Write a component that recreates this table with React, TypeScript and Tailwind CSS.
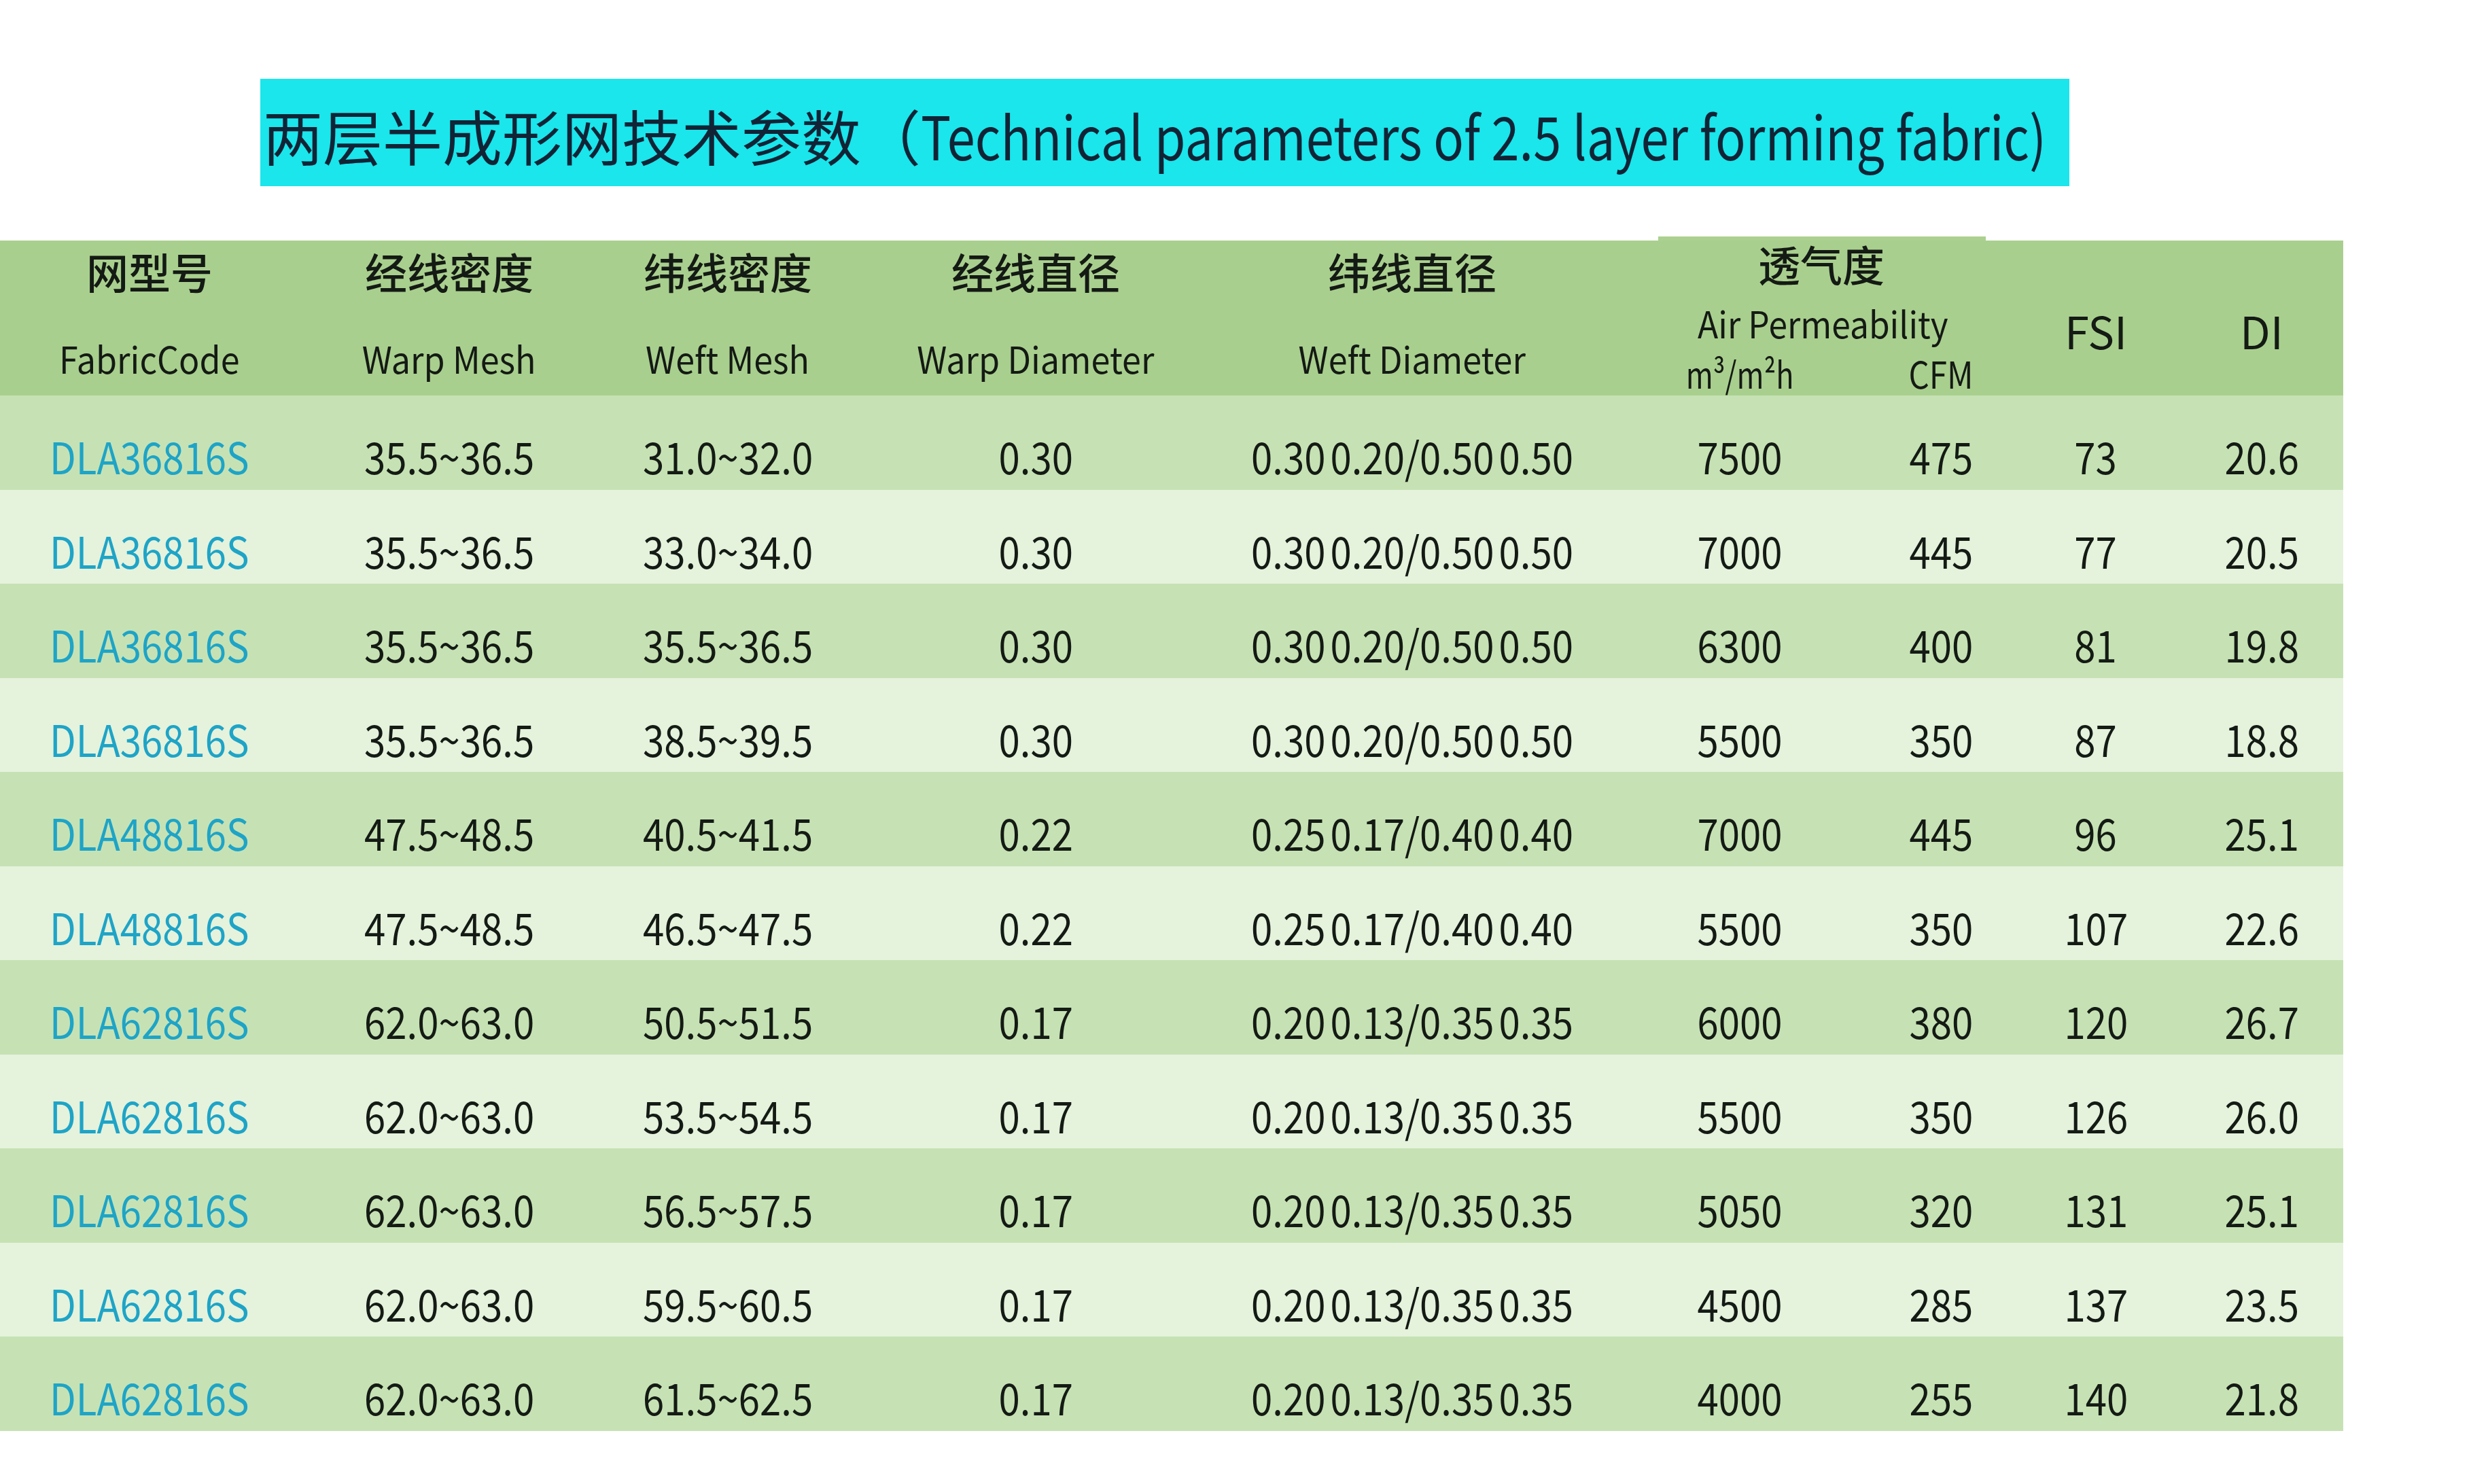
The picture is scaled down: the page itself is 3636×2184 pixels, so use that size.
type Row = {
  code: string;
  warp: string;
  weft: string;
  warpD: string;
  weftD: [string, string, string];
  m3: string;
  cfm: string;
  fsi: string;
  di: string;
};

const d30: [string, string, string] = ["0.30", "0.20/0.50", "0.50"];
const d25: [string, string, string] = ["0.25", "0.17/0.40", "0.40"];
const d20: [string, string, string] = ["0.20", "0.13/0.35", "0.35"];

const rows: Row[] = [
  { code: "DLA36816S", warp: "35.5~36.5", weft: "31.0~32.0", warpD: "0.30", weftD: d30, m3: "7500", cfm: "475", fsi: "73", di: "20.6" },
  { code: "DLA36816S", warp: "35.5~36.5", weft: "33.0~34.0", warpD: "0.30", weftD: d30, m3: "7000", cfm: "445", fsi: "77", di: "20.5" },
  { code: "DLA36816S", warp: "35.5~36.5", weft: "35.5~36.5", warpD: "0.30", weftD: d30, m3: "6300", cfm: "400", fsi: "81", di: "19.8" },
  { code: "DLA36816S", warp: "35.5~36.5", weft: "38.5~39.5", warpD: "0.30", weftD: d30, m3: "5500", cfm: "350", fsi: "87", di: "18.8" },
  { code: "DLA48816S", warp: "47.5~48.5", weft: "40.5~41.5", warpD: "0.22", weftD: d25, m3: "7000", cfm: "445", fsi: "96", di: "25.1" },
  { code: "DLA48816S", warp: "47.5~48.5", weft: "46.5~47.5", warpD: "0.22", weftD: d25, m3: "5500", cfm: "350", fsi: "107", di: "22.6" },
  { code: "DLA62816S", warp: "62.0~63.0", weft: "50.5~51.5", warpD: "0.17", weftD: d20, m3: "6000", cfm: "380", fsi: "120", di: "26.7" },
  { code: "DLA62816S", warp: "62.0~63.0", weft: "53.5~54.5", warpD: "0.17", weftD: d20, m3: "5500", cfm: "350", fsi: "126", di: "26.0" },
  { code: "DLA62816S", warp: "62.0~63.0", weft: "56.5~57.5", warpD: "0.17", weftD: d20, m3: "5050", cfm: "320", fsi: "131", di: "25.1" },
  { code: "DLA62816S", warp: "62.0~63.0", weft: "59.5~60.5", warpD: "0.17", weftD: d20, m3: "4500", cfm: "285", fsi: "137", di: "23.5" },
  { code: "DLA62816S", warp: "62.0~63.0", weft: "61.5~62.5", warpD: "0.17", weftD: d20, m3: "4000", cfm: "255", fsi: "140", di: "21.8" },
];

const cols = "grid grid-cols-[440px_442px_378px_528px_580px_384px_208px_248px_240px]";

// narrow latin text, the source uses a condensed face
const Narrow = ({ children, className = "" }: { children: React.ReactNode; className?: string }) => (
  <span className={`inline-block scale-x-[0.88] ${className}`}>{children}</span>
);

const HeadCell = ({ zh, en }: { zh: string; en: string }) => (
  <div className="flex flex-col items-center pt-[14px]">
    <div className="text-[62px] leading-[62px] font-medium">{zh}</div>
    <div className="mt-[70px] text-[54px] leading-[54px] scale-x-[0.93]">{en}</div>
  </div>
);

const App = () => {
  return (
    <div className="w-[3636px] h-[2184px] bg-white text-[#141a14] font-['Noto_Sans_CJK_SC',sans-serif] overflow-hidden">
      {/* --- Title --- */}
      <div className="ml-[383px] mt-[116px] w-[2662px] h-[158px] bg-[#1ae6ec] flex items-center pl-[4px] pt-[6px]">
        <h1 className="text-[88px] leading-none font-normal text-[#112436] whitespace-nowrap">
          <span>两层半成形网技术参数（</span>
          <span className="inline-block origin-left scale-x-[0.84]">Technical parameters of 2.5 layer forming fabric)</span>
        </h1>
      </div>

      {/* --- Table --- */}
      <div className="mt-[74px] w-[3448px]">
        <div className="flex h-[6px]">
          <div className="ml-[2440px] w-[482px] bg-[#abd090]" />
        </div>

        {/* header */}
        <div className={`${cols} h-[228px] bg-[#a9cf8e]`}>
          <HeadCell zh="网型号" en="FabricCode" />
          <HeadCell zh="经线密度" en="Warp Mesh" />
          <HeadCell zh="纬线密度" en="Weft Mesh" />
          <HeadCell zh="经线直径" en="Warp Diameter" />
          <HeadCell zh="纬线直径" en="Weft Diameter" />
          <div className="col-span-2 flex flex-col items-center pt-[3px]">
            <div className="ml-[32px] text-[62px] leading-[62px] font-medium">透气度</div>
            <div className="ml-[36px] mt-[29px] text-[54px] leading-[54px] scale-x-[0.92]">Air Permeability</div>
            <div className="mt-[20px] grid grid-cols-[384px_208px] w-full text-[54px] leading-[54px]">
              <div className="text-center">
                <span className="inline-block scale-x-[0.8]">m³/m²h</span>
              </div>
              <div className="text-center">
                <Narrow>CFM</Narrow>
              </div>
            </div>
          </div>
          <div className="text-center pt-[100px] text-[65px] leading-[65px]">FSI</div>
          <div className="text-center pt-[100px] text-[65px] leading-[65px]">DI</div>
        </div>

        {/* body */}
        {rows.map((r, i) => (
          <div
            key={i}
            className={`${cols} h-[138.5px] pt-[56px] text-[64px] leading-[64px] text-center ${
              i % 2 === 0 ? "bg-[#c6e2b4]" : "bg-[#e5f2dc]"
            }`}
          >
            <div>
              <Narrow className="text-[#1ea4c7]">{r.code}</Narrow>
            </div>
            <div>
              <Narrow>{r.warp}</Narrow>
            </div>
            <div>
              <Narrow>{r.weft}</Narrow>
            </div>
            <div>
              <Narrow>{r.warpD}</Narrow>
            </div>
            <div className="flex justify-center gap-[8px] scale-x-[0.88]">
              <span>{r.weftD[0]}</span>
              <span>{r.weftD[1]}</span>
              <span>{r.weftD[2]}</span>
            </div>
            <div>
              <Narrow>{r.m3}</Narrow>
            </div>
            <div>
              <Narrow>{r.cfm}</Narrow>
            </div>
            <div>
              <Narrow>{r.fsi}</Narrow>
            </div>
            <div>
              <Narrow>{r.di}</Narrow>
            </div>
          </div>
        ))}
      </div>
    </div>
  );
};

export default App;
